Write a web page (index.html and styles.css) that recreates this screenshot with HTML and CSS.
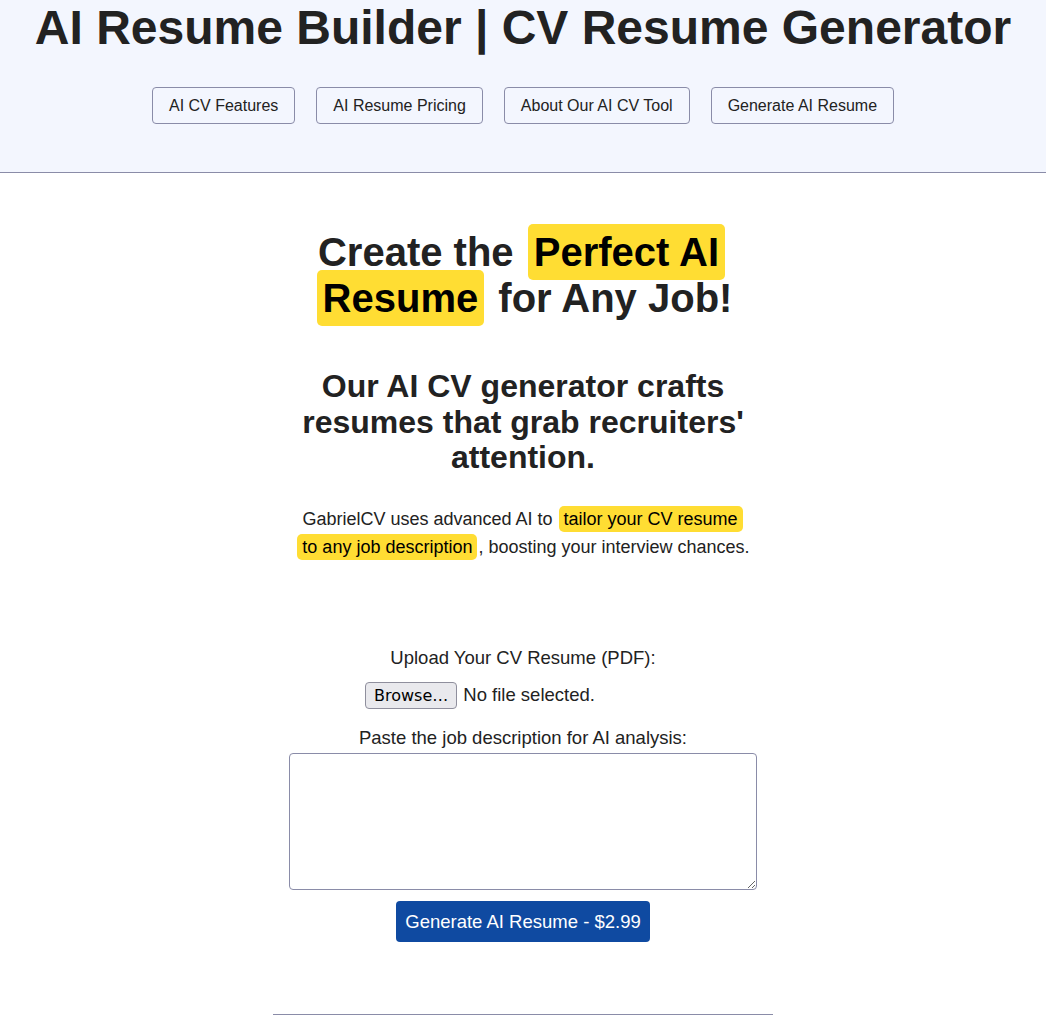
FILE: index.html
```html
<!DOCTYPE html>
<html>
<head>
	<title>AI Resume Builder | CV Resume Generator</title>
	<link rel="stylesheet" href="styles.css">
</head>
<body>
	<header class="site-header">
		<h1>AI Resume Builder | CV Resume Generator</h1>
		<nav class="main-nav">
			<a href="#features" class="nav-btn">AI CV Features</a>
			<a href="#pricing" class="nav-btn">AI Resume Pricing</a>
			<a href="#about" class="nav-btn">About Our AI CV Tool</a>
			<a href="#generate" class="nav-btn">Generate AI Resume</a>
		</nav>
	</header>

	<main class="container">
		<section class="hero">
			<h2>Create the <span class="mark">Perfect AI Resume</span> for Any Job!</h2>
			<h3>Our AI CV generator crafts resumes that grab recruiters' attention.</h3>
			<p>GabrielCV uses advanced AI to <span class="mark">tailor your CV resume<br>to any job description</span>, boosting your interview chances.</p>
		</section>

		<form class="upload-form" id="generate">
			<label for="cv">Upload Your CV Resume (PDF):</label>
			<div class="file-row">
				<button type="button" class="file-btn">Browse…</button>
				<span class="file-name">No file selected.</span>
			</div>

			<label for="job" class="job-label">Paste the job description for AI analysis:</label>
			<textarea id="job"></textarea>

			<button type="submit" class="submit-btn">Generate AI Resume - $2.99</button>
		</form>

		<footer class="site-footer"></footer>
	</main>
</body>
</html>
```

FILE: styles.css
```css
body {
	font-family: "Liberation Sans", Arial, sans-serif;
	margin: 0;
	padding: 0;
	color: #222;
	background-color: #fff;
}

.site-header {
	background-color: #f3f6fe;
	border-bottom: 1px solid #8a8ca8;
	padding: 0 0 48px;
	text-align: center;
}

.site-header h1 {
	margin: 0;
	font-size: 48px;
	line-height: 55px;
}

.main-nav {
	display: flex;
	justify-content: center;
	gap: 21px;
	margin-top: 32px;
}

.nav-btn {
	display: inline-block;
	padding: 9px 16px;
	border: 1px solid #8a8ca8;
	border-radius: 4px;
	color: #222;
	font-size: 16px;
	line-height: 17px;
	text-decoration: none;
}

.container {
	width: 500px;
	margin: 0 auto;
	text-align: center;
}

.hero {
	padding: 56px 20px 0;
}

.hero h2 {
	margin: 0;
	font-size: 40px;
	line-height: 46px;
}

.hero h3 {
	margin: 48px 0 0;
	font-size: 32px;
	line-height: 35.5px;
}

.hero p {
	margin: 29px 0 0;
	font-size: 18px;
	line-height: 28px;
}

.mark {
	background-color: #ffdd33;
	color: #000;
	border-radius: 5px;
	-webkit-box-decoration-break: clone;
	box-decoration-break: clone;
}

.hero h2 .mark {
	padding: 6px 6px;
	margin: 0 3px;
}

.hero p .mark {
	padding: 3px 5px;
	margin: 0 1px;
}

.upload-form {
	display: flex;
	flex-direction: column;
	align-items: center;
	margin-top: 86px;
	padding: 0 20px;
	font-size: 18.5px;
}

.upload-form label {
	line-height: 22px;
}

.file-row {
	display: flex;
	align-items: center;
	gap: 6px;
	width: 316px;
	margin-top: 13px;
}

.file-btn {
	font-family: "DejaVu Sans", sans-serif;
	font-size: 16px;
	color: #000;
	background-color: #e9e9ed;
	border: 1px solid #8f8f9d;
	border-radius: 4px;
	padding: 2px 8px;
	height: 27px;
}

.file-name {
	font-size: 18.5px;
}

.job-label {
	margin-top: 18px;
}

textarea {
	width: 468px;
	height: 137px;
	flex-shrink: 0;
	margin-top: 4px;
	border: 1px solid #8a8ca8;
	border-radius: 4px;
	box-sizing: border-box;
	font-family: inherit;
}

.submit-btn {
	margin-top: 11px;
	padding: 10px 9px;
	background-color: #0f4aa1;
	color: #fff;
	border: none;
	border-radius: 4px;
	font-family: inherit;
	font-size: 18.5px;
	line-height: 21px;
	cursor: pointer;
}

.site-footer {
	margin-top: 72px;
	border-top: 1px solid #8a8ca8;
	height: 40px;
}
```
